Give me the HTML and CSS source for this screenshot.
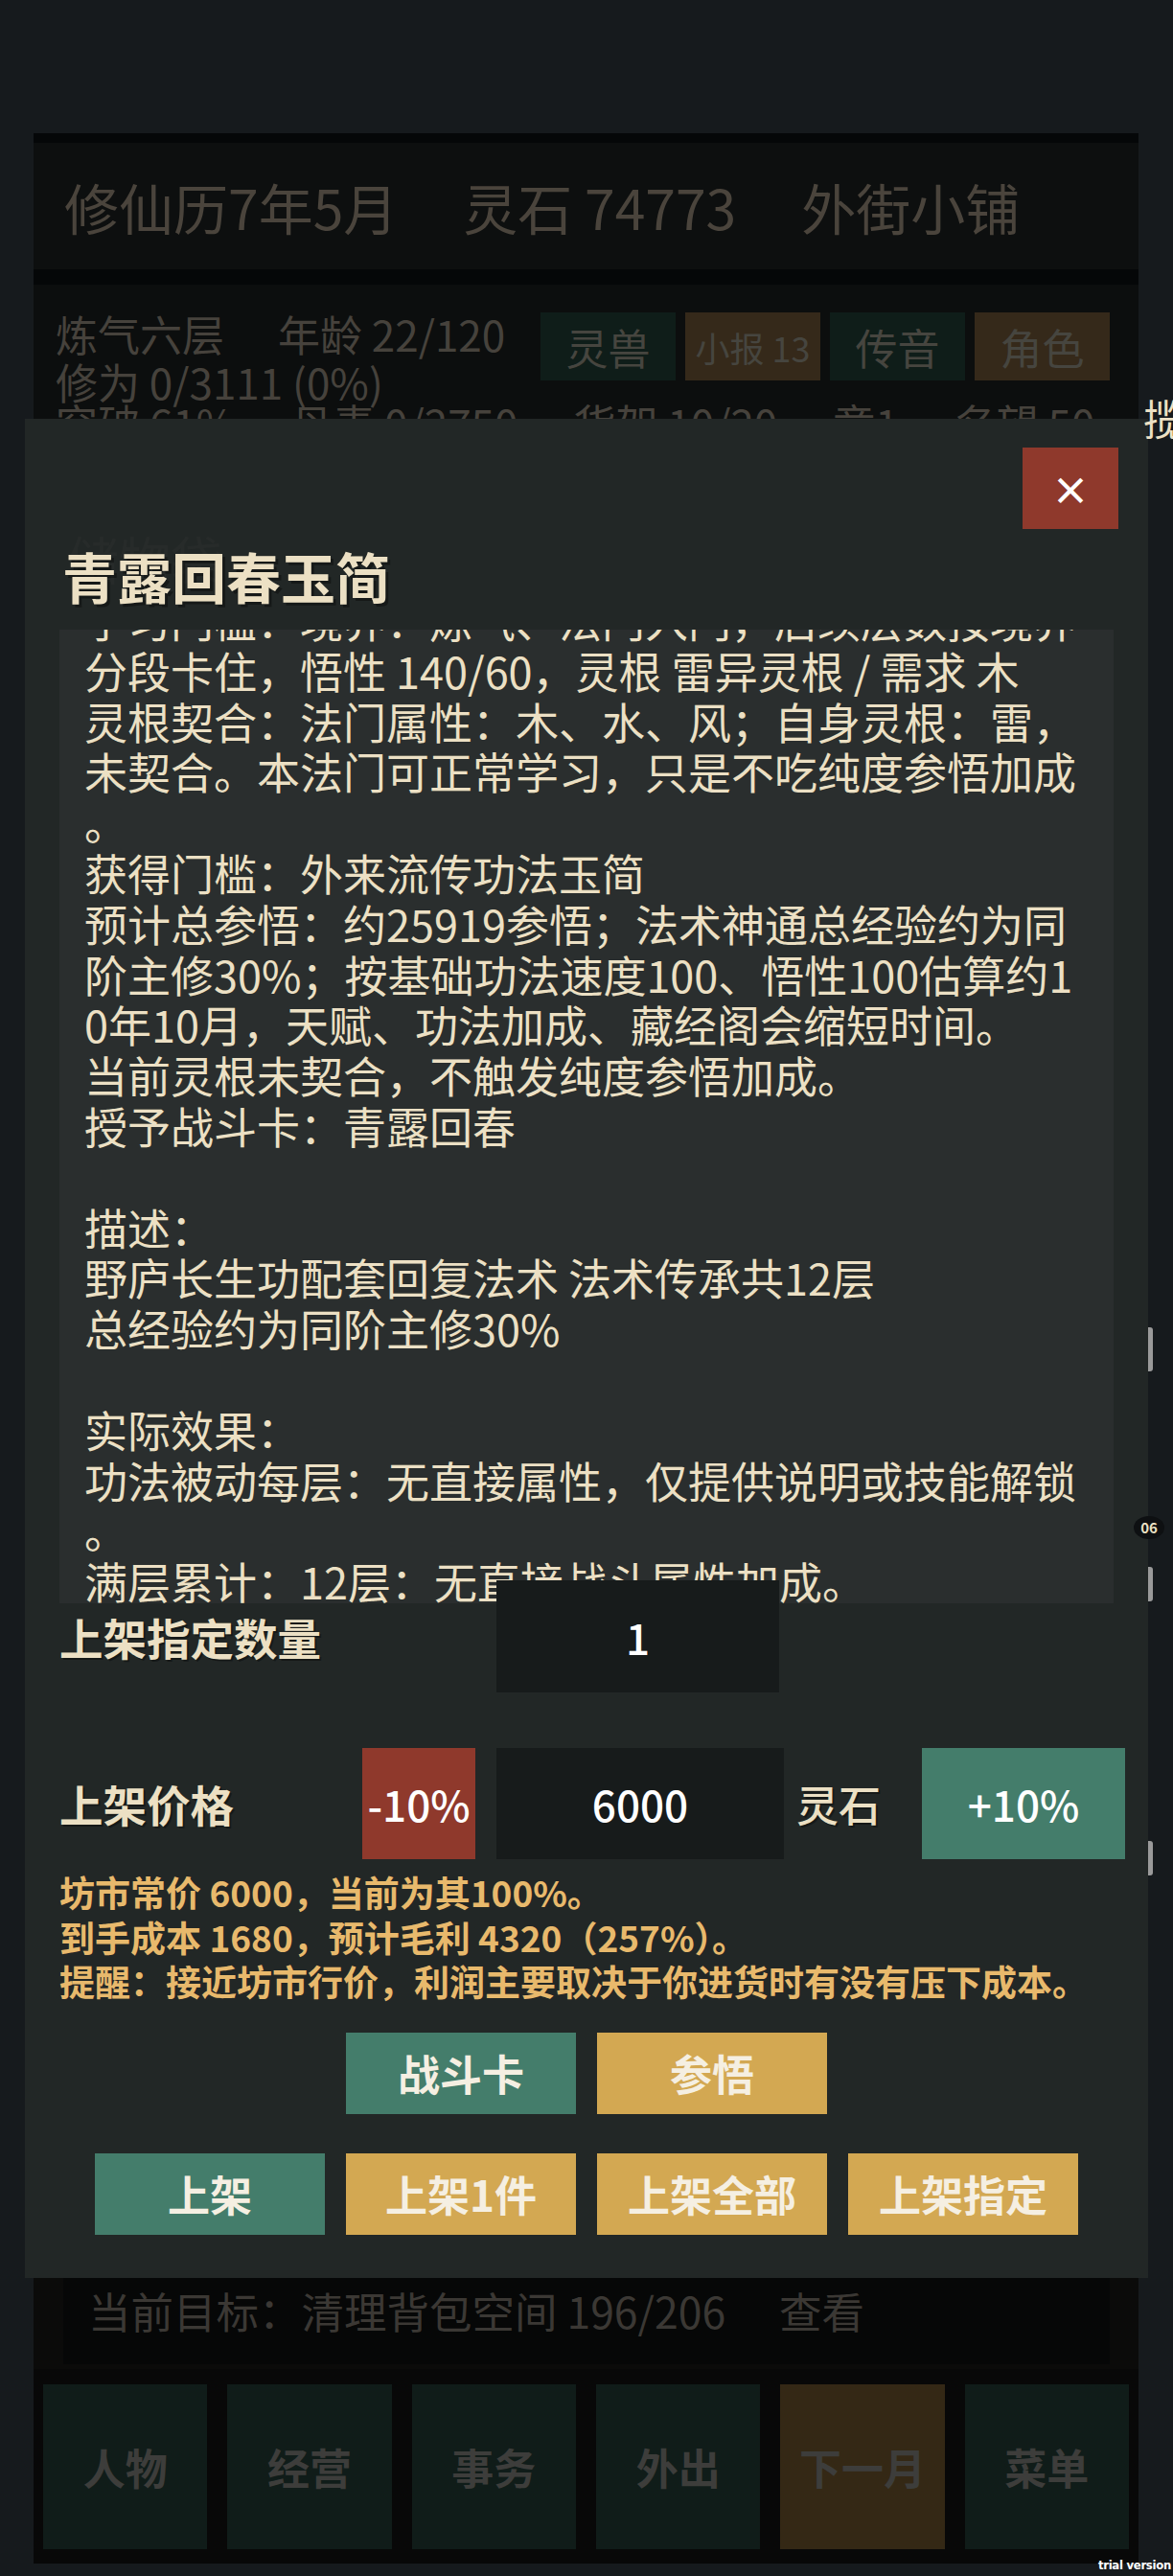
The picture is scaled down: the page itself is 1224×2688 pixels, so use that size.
FILE: index.html
```html
<!DOCTYPE html>
<html lang="zh-CN">
<head>
<meta charset="utf-8">
<title>青露回春玉简</title>
<link rel="stylesheet" href="styles.css">
</head>
<body>
<div class="app">
  <header class="topbar">
    <span>修仙历7年5月</span>
    <span>灵石 74773</span>
    <span>外街小铺</span>
  </header>
  <section class="status">
    <div class="status-top">
      <div class="stats">
        <div><span class="gapr">炼气六层</span>年龄 22/120</div>
        <div>修为 0/3111 (0%)</div>
      </div>
      <div class="quick">
        <div class="qbtn q-green">灵兽</div>
        <div class="qbtn q-gold q-small">小报 13</div>
        <div class="qbtn q-green">传音</div>
        <div class="qbtn q-gold">角色</div>
      </div>
    </div>
    <div class="stats-line">
      <span>突破 61%</span><span>丹毒 0/2750</span><span>货架 10/20</span><span>章1</span><span>名望 50</span>
    </div>
  </section>
  <section class="goal">
    <div class="goal-box">当前目标：清理背包空间 196/206<span class="view">查看</span></div>
  </section>
  <nav class="nav">
    <div class="nbtn n-green">人物</div>
    <div class="nbtn n-green">经营</div>
    <div class="nbtn n-green">事务</div>
    <div class="nbtn n-green">外出</div>
    <div class="nbtn n-gold">下一月</div>
    <div class="nbtn n-green">菜单</div>
  </nav>
</div>

<div class="modal">
  <div class="ghost ghost1">储物袋</div>
  <div class="ghost ghost2">共有若干的储物袋　196/206。　道具总数660。</div>
  <div class="modal-head"><div class="close">×</div></div>
  <h1 class="title">青露回春玉简</h1>
  <div class="desc"><div class="desc-inner">学习门槛：境界：炼气、法门入门，后续层数按境界
分段卡住，悟性 140/60，灵根 雷异灵根 / 需求 木
灵根契合：法门属性：木、水、风；自身灵根：雷，
未契合。本法门可正常学习，只是不吃纯度参悟加成
。
获得门槛：外来流传功法玉简
预计总参悟：约25919参悟；法术神通总经验约为同
阶主修30%；按基础功法速度100、悟性100估算约1
0年10月，天赋、功法加成、藏经阁会缩短时间。
当前灵根未契合，不触发纯度参悟加成。
授予战斗卡：青露回春

描述：
野庐长生功配套回复法术 法术传承共12层
总经验约为同阶主修30%

实际效果：
功法被动每层：无直接属性，仅提供说明或技能解锁
。
满层累计：12层：无直接战斗属性加成。
法术神通：战斗中可使用青露回春。</div></div>

  <div class="row qty-row">
    <div class="label qty-label">上架指定数量</div>
    <div class="field qty-field">1</div>
  </div>

  <div class="row price-row">
    <div class="label price-label">上架价格</div>
    <div class="pbtn p-red minus">-10%</div>
    <div class="field price-field">6000</div>
    <div class="unit">灵石</div>
    <div class="pbtn p-green plus">+10%</div>
  </div>

  <div class="notes">
    <div>坊市常价 6000，当前为其100%。</div>
    <div>到手成本 1680，预计毛利 4320（257%）。</div>
    <div>提醒：接近坊市行价，利润主要取决于你进货时有没有压下成本。</div>
  </div>

  <div class="actions">
    <div class="abtn a-green">战斗卡</div>
    <div class="abtn a-gold">参悟</div>
  </div>
  <div class="actions actions-2">
    <div class="abtn a-green">上架</div>
    <div class="abtn a-gold">上架1件</div>
    <div class="abtn a-gold">上架全部</div>
    <div class="abtn a-gold">上架指定</div>
  </div>
</div>

<div class="peek-char">揽</div>
<div class="peek-badge">06</div>
<div class="peek-mark m1"></div>
<div class="peek-mark m2"></div>
<div class="peek-mark m3"></div>
<div class="trial">trial version</div>
</body>
</html>
```

FILE: styles.css
```css
html, body {
  margin: 0;
  padding: 0;
}
body {
  width: 1224px;
  height: 2688px;
  overflow: hidden;
  position: relative;
  background: #161a1d;
  font-family: "Noto Sans CJK SC", "Noto Sans", sans-serif;
}

/* ---------- underlying page (dimmed) ---------- */
.app {
  margin-left: 35px;
  width: 1153px;
  height: 2675px;
  padding-top: 139px;
  box-sizing: border-box;
  display: flex;
  flex-direction: column;
}
.topbar {
  height: 132px;
  border-top: 10px solid #050708;
  border-bottom: 16px solid #050708;
  background: #0d0f0f;
  display: flex;
  align-items: center;
  gap: 68px;
  padding-left: 32px;
  font-size: 57px;
  color: #4a443c;
  white-space: nowrap;
  flex: none;
}
.status {
  flex: 1;
  background: #0c0e0e;
  padding: 26px 30px 0 23px;
  overflow: hidden;
  color: #46423c;
  font-size: 44px;
}
.status-top {
  display: flex;
  justify-content: space-between;
  align-items: flex-start;
}
.stats {
  line-height: 50px;
  white-space: nowrap;
}
.gapr {
  margin-right: 56px;
}
.quick {
  display: flex;
  gap: 10px;
  margin-top: 3px;
  flex: none;
}
.qbtn {
  width: 141px;
  height: 71px;
  display: flex;
  align-items: center;
  justify-content: center;
  color: #46453f;
  font-size: 44px;
}
.q-small {
  font-size: 36px;
}
.q-green { background: #0f1d19; }
.q-gold { background: #35291a; }
.stats-line {
  margin-top: -7px;
  line-height: 50px;
  white-space: nowrap;
}
.stats-line span {
  margin-right: 58px;
}
.goal {
  height: 95px;
  flex: none;
  background: #0b0b0a;
  padding: 0 30px 5px 31px;
  box-sizing: border-box;
}
.goal-box {
  height: 90px;
  background: #060707;
  padding: 1px 0 0 26px;
  box-sizing: border-box;
  font-size: 44.5px;
  color: #3b3834;
  white-space: nowrap;
}
.view {
  margin-left: 56px;
}
.nav {
  height: 203px;
  flex: none;
  background: #080808;
  padding: 16px 10px 15px;
  box-sizing: border-box;
  display: grid;
  grid-template-columns: repeat(6, 1fr);
  column-gap: 21px;
}
.nbtn {
  display: flex;
  align-items: center;
  justify-content: center;
  font-size: 44px;
  font-weight: 700;
  color: #3d3d3b;
}
.n-green { background: #101c19; }
.n-gold { background: #342815; }

/* ---------- modal ---------- */
.modal {
  position: absolute;
  left: 26px;
  top: 437px;
  width: 1172px;
  height: 1940px;
  box-sizing: border-box;
  padding: 30px 36px 45px;
  background: #222726;
  color: #ece0c4;
}
.ghost {
  position: absolute;
  color: rgba(236, 224, 196, 0.025);
  white-space: nowrap;
}
.ghost1 {
  left: 44px;
  top: 106px;
  font-size: 54px;
}
.ghost2 {
  left: 58px;
  top: 162px;
  font-size: 34px;
}
.modal-head {
  display: flex;
  justify-content: flex-end;
  margin-right: -5px;
}
.close {
  width: 100px;
  height: 85px;
  background: #8f392c;
  color: #ffffff;
  font-size: 40px;
  font-weight: 700;
  display: flex;
  align-items: center;
  justify-content: center;
  line-height: 1;
}
.title {
  position: relative;
  margin: 15px 0 0;
  padding-left: 3px;
  font-size: 57px;
  line-height: 67px;
  font-weight: 700;
  color: #ece0c4;
  text-shadow: 3px 3px 0 rgba(0, 0, 0, 0.35);
}
.desc {
  margin-top: 23px;
  height: 1016px;
  background: #2a2e2e;
  padding: 0 24px 0 26px;
  overflow: hidden;
  font-size: 45px;
  line-height: 52.8px;
  color: #ece0c4;
}
.desc-inner {
  margin-top: -36px;
  white-space: pre;
}
.row {
  position: relative;
  display: flex;
  align-items: center;
}
.row > div {
  flex: none;
}
.qty-row {
  margin-top: -24px;
  height: 117px;
}
.price-row {
  margin-top: 58px;
  height: 116px;
}
.label {
  font-size: 45.5px;
  font-weight: 700;
  color: #ece0c4;
  text-shadow: 2px 2px 0 rgba(0, 0, 0, 0.35);
  white-space: nowrap;
}
.qty-label { width: 456px; }
.price-label { width: 316px; }
.field {
  height: 100%;
  background: #171b1b;
  color: #ffffff;
  font-size: 44px;
  font-weight: 500;
  display: flex;
  align-items: center;
  justify-content: center;
}
.qty-field { width: 295px; }
.price-field { width: 300px; }
.pbtn {
  height: 100%;
  display: flex;
  align-items: center;
  justify-content: center;
  color: #ffffff;
  font-size: 44px;
  font-weight: 500;
}
.p-red { background: #8f392c; }
.p-green { background: #447d6b; }
.minus {
  width: 118px;
  margin-right: 22px;
}
.plus { width: 212px; }
.unit {
  margin-left: 13px;
  width: 131px;
  font-size: 44px;
  font-weight: 500;
  color: #ece0c4;
  text-shadow: 2px 2px 0 rgba(0, 0, 0, 0.35);
}
.notes {
  margin-top: 11px;
  font-size: 37px;
  line-height: 46.5px;
  font-weight: 700;
  color: #e8b96c;
  white-space: nowrap;
}
.actions {
  margin-top: 30px;
  display: flex;
  justify-content: center;
  gap: 22px;
}
.actions-2 {
  margin-top: 41px;
}
.abtn {
  width: 240px;
  height: 85px;
  flex: none;
  display: flex;
  align-items: center;
  justify-content: center;
  font-size: 44px;
  font-weight: 700;
  color: #f5efe2;
}
.a-green { background: #447d6b; }
.a-gold { background: #d3a852; }

/* ---------- bits peeking out at the right edge ---------- */
.peek-char {
  position: absolute;
  left: 1193px;
  top: 410px;
  font-size: 44px;
  line-height: 52px;
  color: #ece0c4;
}
.peek-badge {
  position: absolute;
  left: 1183px;
  top: 1582px;
  width: 32px;
  height: 24px;
  border-radius: 50%;
  background: #0e1012;
  color: #ece0c4;
  font-size: 15px;
  font-weight: 700;
  line-height: 24px;
  text-align: center;
}
.peek-mark {
  position: absolute;
  left: 1198px;
  width: 5px;
  background: #9a9a9a;
  border-radius: 0 3px 3px 0;
}
.m1 { top: 1385px; height: 46px; }
.m2 { top: 1635px; height: 36px; }
.m3 { top: 1921px; height: 36px; }
.trial {
  position: absolute;
  right: 2px;
  bottom: 4px;
  font-family: "DejaVu Sans Condensed", "Liberation Sans", sans-serif;
  font-size: 13px;
  font-weight: 700;
  letter-spacing: -0.3px;
  color: #ffffff;
  line-height: 14px;
}
```
